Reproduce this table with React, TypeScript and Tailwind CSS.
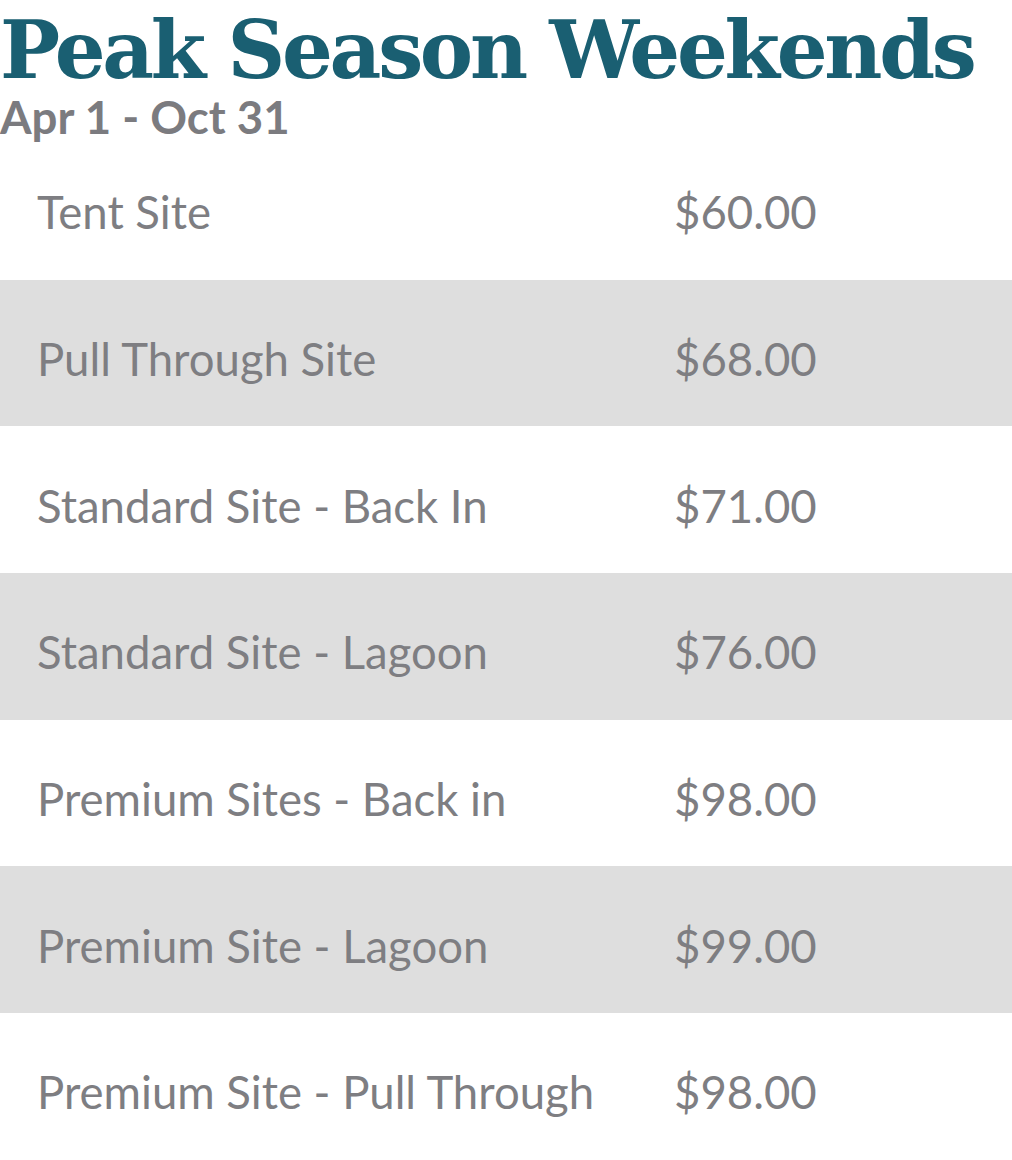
const RATES = [
  { name: 'Tent Site', price: '$60.00' },
  { name: 'Pull Through Site', price: '$68.00' },
  { name: 'Standard Site - Back In', price: '$71.00' },
  { name: 'Standard Site - Lagoon', price: '$76.00' },
  { name: 'Premium Sites - Back in', price: '$98.00' },
  { name: 'Premium Site - Lagoon', price: '$99.00' },
  { name: 'Premium Site - Pull Through', price: '$98.00' },
]

export default function App() {
  return (
    <div className="w-[1012px] h-[1160px] bg-white overflow-hidden">
      {/* Header */}
      <div className="h-[133px]">
        <h1 className="font-['DejaVu_Serif',serif] font-bold text-[80px] leading-[100px] text-[#1a5f72] tracking-[-3.3px] whitespace-nowrap">
          Peak Season Weekends
        </h1>
        <div className="font-['Lato',sans-serif] font-bold text-[45.6px] leading-[33px] text-[#7b7b7f] mt-0">
          Apr 1 - Oct 31
        </div>
      </div>

      {/* Rates table */}
      <div className="flex flex-col font-['Lato',sans-serif] text-[45.5px] text-[#7e7e82]">
        {RATES.map((r, i) => (
          <div
            key={r.name + i}
            className={`flex items-center h-[146.7px] pt-[12px] ${i % 2 === 1 ? 'bg-[#dedede]' : ''}`}
          >
            <div className="w-[636px] pl-[37px] whitespace-nowrap">{r.name}</div>
            <div className="pl-[38px]">{r.price}</div>
          </div>
        ))}
      </div>
    </div>
  )
}
